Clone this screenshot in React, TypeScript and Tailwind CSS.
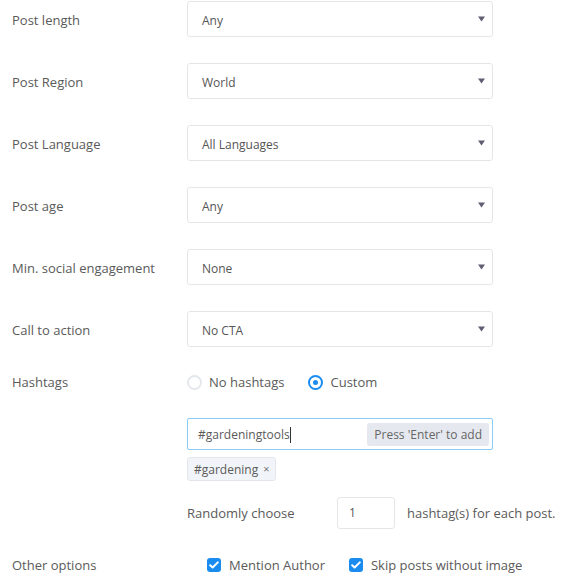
import React from 'react';

const selects = [
  { label: 'Post length', value: 'Any' },
  { label: 'Post Region', value: 'World' },
  { label: 'Post Language', value: 'All Languages' },
  { label: 'Post age', value: 'Any' },
  { label: 'Min. social engagement', value: 'None' },
  { label: 'Call to action', value: 'No CTA' },
];

function Caret() {
  return (
    <svg width="7" height="6" viewBox="0 0 7 6" className="text-[#5e5d72]">
      <path d="M0 0.5h7L3.5 5.5z" fill="currentColor" />
    </svg>
  );
}

function Check() {
  return (
    <span className="w-[14px] h-[14px] rounded-[3px] bg-[#1a8cf0] flex items-center justify-center flex-shrink-0">
      <svg width="10" height="8" viewBox="0 0 10 8">
        <path d="M1.2 4.2l2.4 2.3L8.8 1.4" stroke="white" strokeWidth="2" fill="none" strokeLinecap="round" strokeLinejoin="round" />
      </svg>
    </span>
  );
}

export default function App() {
  return (
    <div className="w-[565px] h-[580px] bg-white text-[13px] text-[#5a5a5a] font-['Open_Sans',sans-serif] pl-[12px] pt-[1px] overflow-hidden">
      {selects.map((s) => (
        <div key={s.label} className="flex items-center mb-[26px]">
          <div className="w-[175px] flex-shrink-0 pt-[4px]">{s.label}</div>
          <div className="w-[306px] h-[36px] border border-[#e6e6e6] rounded-[3px] flex items-center justify-between pl-[14px] pr-[7px] text-[12px] text-[#555]">
            <span className="pt-[4px]">{s.value}</span>
            <Caret />
          </div>
        </div>
      ))}

      <div className="flex items-center h-[20px] -mt-[1px]">
        <div className="w-[175px] flex-shrink-0 pt-[2px]">Hashtags</div>
        <label className="flex items-center gap-[7px]">
          <span className="w-[15px] h-[15px] rounded-full border-2 border-[#e4e7eb]" />
          <span className="pt-[2px]">No hashtags</span>
        </label>
        <label className="flex items-center gap-[7px] ml-[24px]">
          <span className="w-[15px] h-[15px] rounded-full border-2 border-[#1a8cf0] flex items-center justify-center">
            <span className="w-[5px] h-[5px] rounded-full bg-[#1a8cf0]" />
          </span>
          <span className="pt-[2px]">Custom</span>
        </label>
      </div>

      <div className="ml-[175px] mt-[26px] w-[306px] h-[32px] border border-[#8ccbf6] rounded-[2px] flex items-center justify-between pl-[10px] pr-[3px] text-[12px]">
        <span className="flex items-center pt-[2px]">
          #gardeningtools<span className="w-px h-[16px] bg-[#333]" />
        </span>
        <span className="bg-[#e5e9ef] rounded-[3px] px-[7px] h-[23px] flex items-center text-[#666] pt-[1px]">
          Press 'Enter' to add
        </span>
      </div>

      <div className="ml-[175px] mt-[7px] inline-flex items-center h-[24px] px-[6px] bg-[#f1f4f8] border border-[#e3e7ec] rounded-[3px] gap-[5px] text-[12px]">
        <span className="pt-[1px]">#gardening</span>
        <span className="text-[11px] text-[#777]">×</span>
      </div>

      <div className="ml-[175px] mt-[16px] flex items-center h-[32px]">
        <span className="w-[150px] pt-[2px]">Randomly choose</span>
        <div className="w-[58px] h-[32px] border border-[#e6e6e6] rounded-[3px] flex items-center pl-[11px] text-[12px]">1</div>
        <span className="ml-[12px] pt-[2px]">hashtag(s) for each post.</span>
      </div>

      <div className="flex items-center mt-[26px] h-[20px]">
        <div className="w-[195px] flex-shrink-0 pt-[2px]">Other options</div>
        <label className="flex items-center gap-[8px]">
          <Check />
          <span className="pt-[2px]">Mention Author</span>
        </label>
        <label className="flex items-center gap-[8px] ml-[24px]">
          <Check />
          <span className="pt-[2px]">Skip posts without image</span>
        </label>
      </div>
    </div>
  );
}
